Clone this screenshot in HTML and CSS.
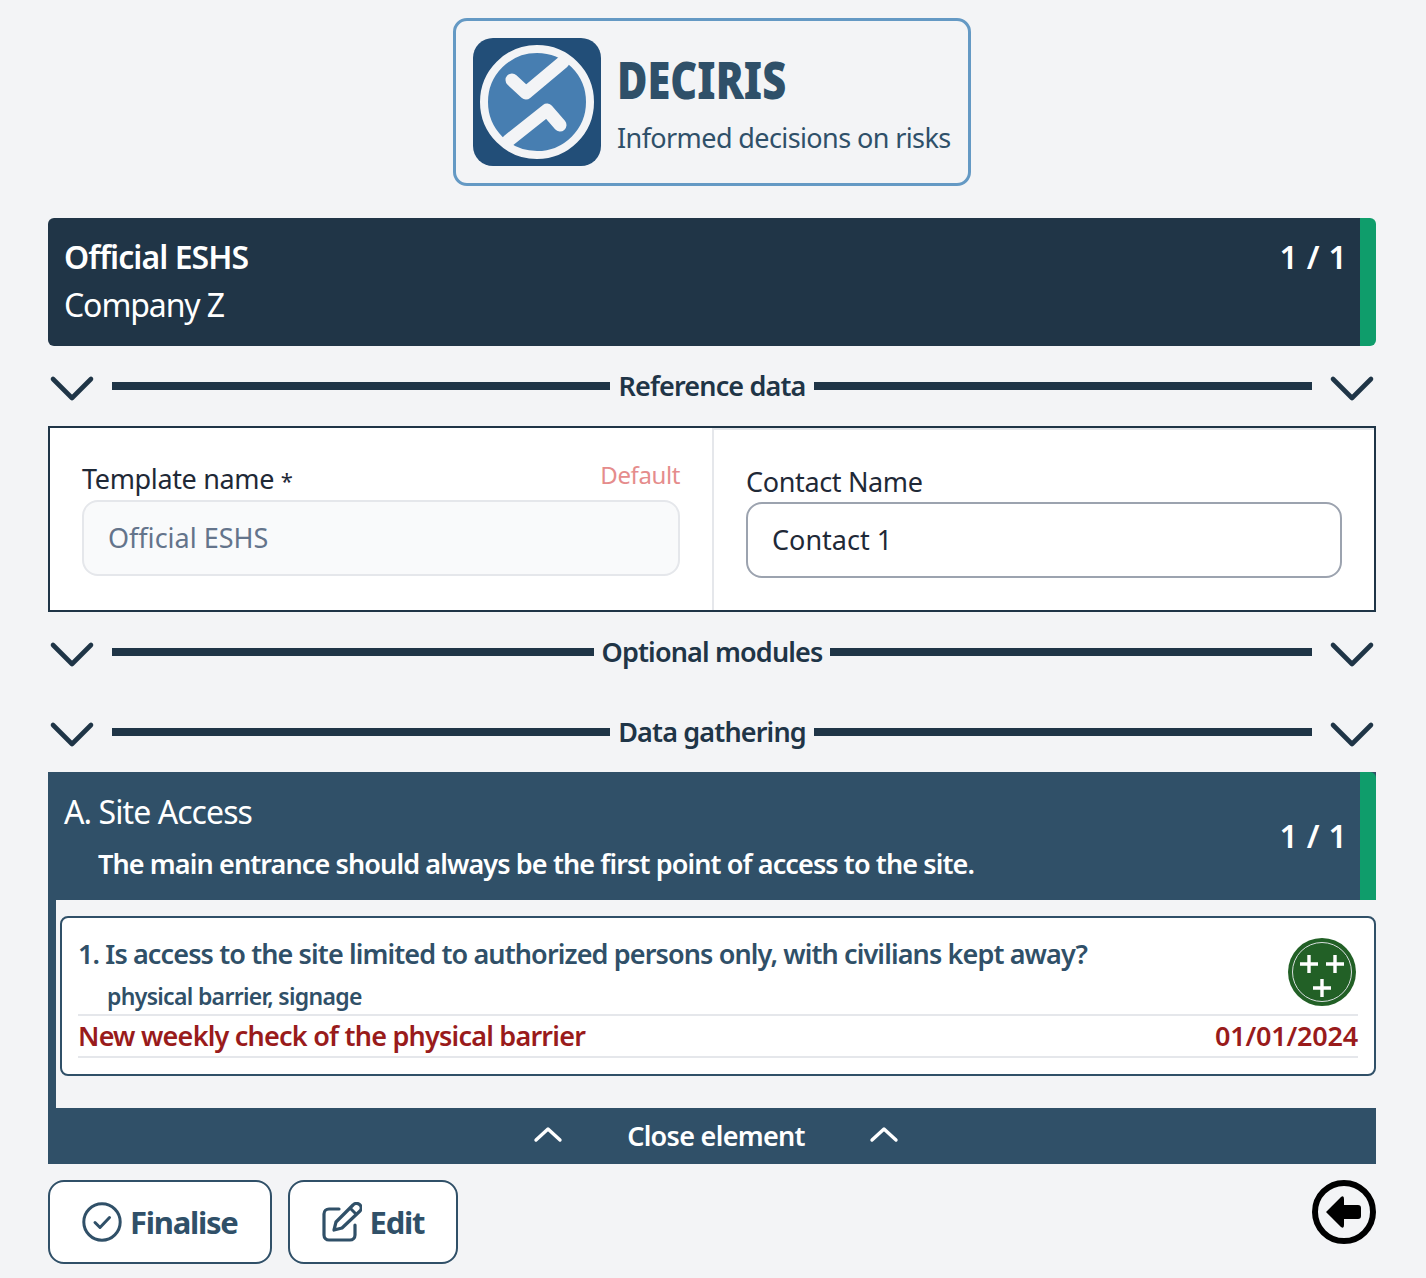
FILE: index.html
```html
<!DOCTYPE html>
<html lang="en">
<head>
    <meta charset="UTF-8">
    <meta name="viewport" content="width=device-width, initial-scale=1.0">
    <title>Deciris</title>
    <link rel="stylesheet" href="styles.css">
</head>
<body>
    <div class="logo-row">
        <div class="logo-box">
            <svg class="logo-icon" viewBox="0 0 128 128">
                <rect width="128" height="128" rx="20" fill="#224e78"/>
                <circle cx="64" cy="64" r="53" fill="#477eb1" stroke="#f3f4f6" stroke-width="8"/>
                <path d="M39 42 L53 55 L90 24" fill="none" stroke="#f3f4f6" stroke-width="13" stroke-linecap="round" stroke-linejoin="round"/>
                <path d="M35 103 L74 72 L87 87" fill="none" stroke="#f3f4f6" stroke-width="13" stroke-linecap="round" stroke-linejoin="round"/>
            </svg>
            <div class="logo-text">
                <div class="logo-name">DECIRIS</div>
                <div class="logo-tag">Informed decisions on risks</div>
            </div>
        </div>
    </div>

    <div class="top-header">
        <div class="header-titles">
            <div class="header-title">Official ESHS</div>
            <div class="header-sub">Company Z</div>
        </div>
        <div class="header-count">1 / 1</div>
    </div>

    <div class="divider">
        <svg class="chevron" viewBox="0 0 48 28"><path d="M5 5 L24 24 L43 5"/></svg>
        <div class="divider-line"></div>
        <span class="divider-label">Reference data</span>
        <div class="divider-line"></div>
        <svg class="chevron" viewBox="0 0 48 28"><path d="M5 5 L24 24 L43 5"/></svg>
    </div>

    <div class="fields-panel">
        <div class="field field-left">
            <div class="field-head">
                <label class="field-label">Template name <span class="required">*</span></label>
                <span class="field-default">Default</span>
            </div>
            <div class="field-input field-input-disabled">Official ESHS</div>
        </div>
        <div class="field field-right">
            <div class="field-head">
                <label class="field-label">Contact Name</label>
            </div>
            <div class="field-input">Contact 1</div>
        </div>
    </div>

    <div class="divider">
        <svg class="chevron" viewBox="0 0 48 28"><path d="M5 5 L24 24 L43 5"/></svg>
        <div class="divider-line"></div>
        <span class="divider-label">Optional modules</span>
        <div class="divider-line"></div>
        <svg class="chevron" viewBox="0 0 48 28"><path d="M5 5 L24 24 L43 5"/></svg>
    </div>

    <div class="divider">
        <svg class="chevron" viewBox="0 0 48 28"><path d="M5 5 L24 24 L43 5"/></svg>
        <div class="divider-line"></div>
        <span class="divider-label">Data gathering</span>
        <div class="divider-line"></div>
        <svg class="chevron" viewBox="0 0 48 28"><path d="M5 5 L24 24 L43 5"/></svg>
    </div>

    <div class="element">
        <div class="element-header">
            <div class="element-titles">
                <div class="element-title">A. Site Access</div>
                <div class="element-desc">The main entrance should always be the first point of access to the site.</div>
            </div>
            <div class="header-count">1 / 1</div>
        </div>
        <div class="element-body">
            <div class="question-card">
                <div class="question-top">
                    <div>
                        <div class="question-text">1. Is access to the site limited to authorized persons only, with civilians kept away?</div>
                        <div class="question-hint">physical barrier, signage</div>
                    </div>
                    <svg class="rating" viewBox="0 0 68 68">
                        <circle cx="34" cy="34" r="34" fill="#226026"/>
                        <circle cx="34" cy="34" r="29.5" fill="none" stroke="#d9dfe0" stroke-width="1"/>
                        <path d="M21 17 V35 M12 26 H30 M47 17 V35 M38 26 H56 M34 41 V59 M25 50 H43" stroke="#fff" stroke-width="3.4" fill="none"/>
                    </svg>
                </div>
                <div class="action-row">
                    <span class="action-text">New weekly check of the physical barrier</span>
                    <span class="action-date">01/01/2024</span>
                </div>
            </div>
        </div>
        <div class="element-close">
            <svg class="chevron-up" viewBox="0 0 30 18"><path d="M3 15 L15 4 L27 15"/></svg>
            <span class="close-label">Close element</span>
            <svg class="chevron-up" viewBox="0 0 30 18"><path d="M3 15 L15 4 L27 15"/></svg>
        </div>
    </div>

    <div class="footer">
        <div class="footer-buttons">
            <button class="btn">
                <svg class="btn-icon" viewBox="0 0 40 40">
                    <circle cx="20" cy="20" r="18.2" fill="none" stroke="#305068" stroke-width="3"/>
                    <path d="M13 20.5 L18 25.5 L27.5 15.5" fill="none" stroke="#305068" stroke-width="3" stroke-linecap="round" stroke-linejoin="round"/>
                </svg>
                Finalise
            </button>
            <button class="btn">
                <svg class="btn-icon" viewBox="0 0 40 40">
                    <path d="M17 7 H7 A5 5 0 0 0 2 12 V33 A5 5 0 0 0 7 38 H28 A5 5 0 0 0 33 33 V23" fill="none" stroke="#305068" stroke-width="3.2" stroke-linecap="round"/>
                    <path d="M12 28 L14 20 L31 3 A3.6 3.6 0 0 1 38 9 L20 26 Z" fill="none" stroke="#305068" stroke-width="3.2" stroke-linejoin="round"/>
                    <path d="M28 6 L35 13" stroke="#305068" stroke-width="3"/>
                </svg>
                Edit
            </button>
        </div>
        <svg class="back-icon" viewBox="0 0 64 64">
            <circle cx="32" cy="32" r="29" fill="none" stroke="#000" stroke-width="6"/>
            <path d="M14 32 L29 17 Q32 15 32 19 V25 H46 Q49 25 49 28 V36 Q49 39 46 39 H32 V45 Q32 49 29 47 Z" fill="#000"/>
        </svg>
    </div>
</body>
</html>
```

FILE: styles.css
```css
body {
    margin: 0;
    padding: 18px 50px 14px 48px;
    background: #f3f4f6;
    color: #1f3547;
    font-family: "Noto Sans", sans-serif;
}

/* logo */
.logo-row {
    display: flex;
    justify-content: center;
    margin-bottom: 32px;
}

.logo-box {
    display: flex;
    align-items: center;
    gap: 16px;
    width: 518px;
    height: 168px;
    box-sizing: border-box;
    padding: 0 17px;
    border: 3px solid #6499c4;
    border-radius: 14px;
}

.logo-icon {
    width: 128px;
    height: 128px;
    flex-shrink: 0;
}

.logo-text {
    white-space: nowrap;
}

.logo-name {
    font-size: 52px;
    font-weight: 900;
    line-height: 60px;
    color: #2f5069;
    transform: scaleX(0.8);
    transform-origin: left center;
}

.logo-tag {
    margin-top: 11px;
    font-size: 27px;
    line-height: 36px;
    letter-spacing: -0.6px;
    color: #2f5069;
}

/* top header */
.top-header {
    display: flex;
    justify-content: space-between;
    align-items: flex-start;
    height: 128px;
    box-sizing: border-box;
    padding: 15px 13px 0 16px;
    background: #203547;
    border-right: 16px solid #0f9d6b;
    border-radius: 6px;
    color: #fff;
}

.header-title {
    font-size: 32px;
    line-height: 48px;
    font-weight: 600;
    letter-spacing: -0.95px;
}

.header-sub {
    font-size: 32px;
    line-height: 48px;
    letter-spacing: -1.1px;
}

.header-count {
    font-size: 32px;
    line-height: 48px;
    font-weight: 600;
    letter-spacing: 0.3px;
}

/* section dividers */
.divider {
    display: flex;
    align-items: center;
    height: 80px;
}

.chevron {
    width: 48px;
    height: 28px;
    flex-shrink: 0;
    margin-top: 4px;
}

.chevron path {
    fill: none;
    stroke: #1f3547;
    stroke-width: 4.6;
    stroke-linecap: round;
    stroke-linejoin: round;
}

.divider-line {
    flex: 1;
    height: 8px;
    margin: 0 16px;
    background: #1f3547;
}

.divider-label {
    margin: 0 -8px;
    font-size: 27px;
    line-height: 36px;
    font-weight: 600;
    letter-spacing: -0.85px;
}

/* reference data */
.fields-panel {
    display: flex;
    height: 186px;
    box-sizing: border-box;
    background: #fff;
    border: 2px solid #1f3547;
}

.field {
    box-sizing: border-box;
    padding: 0 32px;
}

.field-left {
    width: 664px;
    padding-top: 28px;
    border-right: 2px solid #e5e7eb;
}

.field-left .field-head {
    height: 44px;
}

.field-right {
    flex: 1;
    padding-top: 30px;
    border-top: 2px solid #e5e7eb;
}

.field-head {
    display: flex;
    justify-content: space-between;
    align-items: flex-start;
    height: 42px;
}

.field-label {
    align-self: flex-end;
    font-size: 27px;
    line-height: 40px;
    letter-spacing: -0.35px;
    color: #1f2937;
}

.required {
    font-size: 22px;
}

.field-default {
    margin-top: 1px;
    font-size: 24px;
    line-height: 36px;
    letter-spacing: -0.4px;
    color: #e58c8c;
}

.field-input {
    height: 76px;
    box-sizing: border-box;
    padding: 0 24px;
    border: 2px solid #9ca3af;
    border-radius: 16px;
    background: #fff;
    font-size: 27px;
    line-height: 72px;
    color: #1f2937;
}

.field-input-disabled {
    border-color: #e5e7eb;
    background: #f9fafb;
    color: #64748b;
}

/* site access element */
.element {
    background: #305068;
}

.element-header {
    display: flex;
    justify-content: space-between;
    align-items: center;
    height: 128px;
    box-sizing: border-box;
    padding: 16px 13px 16px 16px;
    border-right: 16px solid #0f9d6b;
    border-radius: 6px 6px 0 0;
    color: #fff;
}

.element-titles {
    align-self: flex-start;
}

.element-title {
    font-size: 32px;
    line-height: 48px;
    letter-spacing: -0.93px;
}

.element-desc {
    margin-top: 6px;
    padding-left: 34px;
    font-size: 27px;
    line-height: 44px;
    font-weight: 600;
    letter-spacing: -0.89px;
}

.element-body {
    margin-left: 8px;
    padding: 16px 0 32px 4px;
    background: #f3f4f6;
}

.question-card {
    height: 160px;
    box-sizing: border-box;
    padding: 16px 16px 0 16px;
    background: #fff;
    border: 2px solid #305068;
    border-radius: 8px;
}

.question-top {
    display: flex;
    justify-content: space-between;
    height: 80px;
    border-bottom: 2px solid #e5e7eb;
}

.question-text {
    font-size: 27px;
    line-height: 40px;
    font-weight: 600;
    letter-spacing: -0.88px;
    color: #305068;
}

.question-hint {
    margin-top: 4px;
    padding-left: 29px;
    font-size: 23px;
    line-height: 36px;
    font-weight: 600;
    letter-spacing: -0.68px;
    color: #305068;
}

.rating {
    width: 68px;
    height: 68px;
    margin: 4px 2px 0 0;
}

.action-row {
    display: flex;
    justify-content: space-between;
    height: 40px;
    border-bottom: 2px solid #e5e7eb;
    font-size: 27px;
    line-height: 40px;
    font-weight: 600;
    color: #991b1b;
}

.action-text {
    letter-spacing: -0.78px;
}

.action-date {
    letter-spacing: -0.2px;
}

.element-close {
    display: flex;
    justify-content: center;
    align-items: center;
    gap: 64px;
    height: 56px;
    padding-left: 8px;
    color: #fff;
}

.close-label {
    font-size: 27px;
    line-height: 36px;
    font-weight: 600;
    letter-spacing: -0.7px;
}

.chevron-up {
    width: 30px;
    height: 18px;
    margin-top: -4px;
}

.chevron-up path {
    fill: none;
    stroke: #fff;
    stroke-width: 3.4;
    stroke-linecap: round;
    stroke-linejoin: round;
}

/* footer buttons */
.footer {
    display: flex;
    justify-content: space-between;
    align-items: flex-start;
    margin-top: 16px;
}

.footer-buttons {
    display: flex;
    gap: 16px;
}

.btn {
    display: flex;
    align-items: center;
    gap: 8px;
    height: 84px;
    padding: 0 32px;
    background: #fff;
    border: 2px solid #305068;
    border-radius: 16px;
    font-family: "Noto Sans", sans-serif;
    font-size: 31px;
    font-weight: 700;
    letter-spacing: -1.25px;
    color: #305068;
}

.btn-icon {
    width: 40px;
    height: 40px;
}

.back-icon {
    width: 64px;
    height: 64px;
}
```
